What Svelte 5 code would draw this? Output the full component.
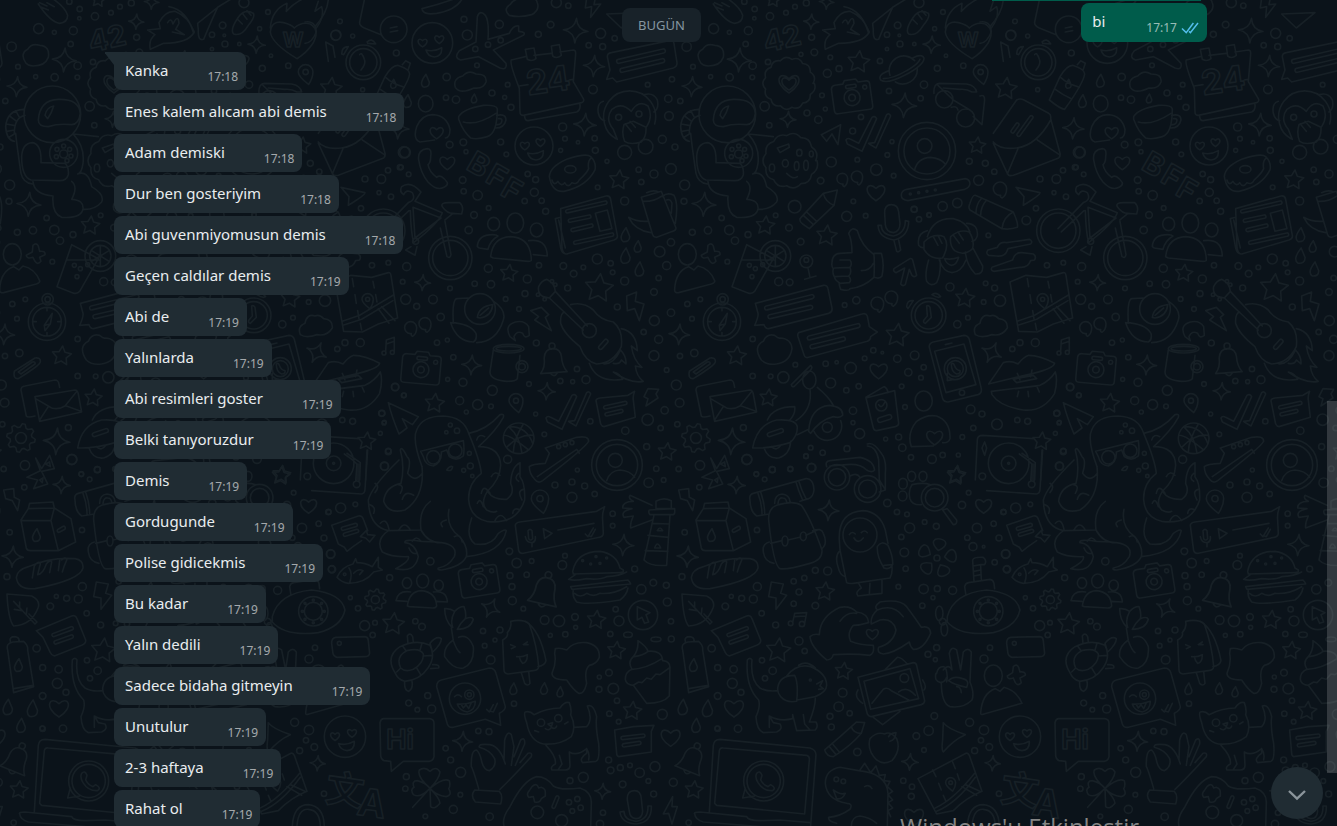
<script>
  const sent = [{ text: 'bi', time: '17:17' }];

  const received = [
    ['Kanka', '17:18'],
    ['Enes kalem alıcam abi demis', '17:18'],
    ['Adam demiski', '17:18'],
    ['Dur ben gosteriyim', '17:18'],
    ['Abi guvenmiyomusun demis', '17:18'],
    ['Geçen caldılar demis', '17:19'],
    ['Abi de', '17:19'],
    ['Yalınlarda', '17:19'],
    ['Abi resimleri goster', '17:19'],
    ['Belki tanıyoruzdur', '17:19'],
    ['Demis', '17:19'],
    ['Gordugunde', '17:19'],
    ['Polise gidicekmis', '17:19'],
    ['Bu kadar', '17:19'],
    ['Yalın dedili', '17:19'],
    ['Sadece bidaha gitmeyin', '17:19'],
    ['Unutulur', '17:19'],
    ['2-3 haftaya', '17:19'],
    ['Rahat ol', '17:19']
  ].map(([text, time]) => ({ text, time }));

  // Wallpaper: doodles in sheets of one-third-pixel units, the whole set repeating every 675px.
  const PERIOD = 675;

  const chunk = (list, n) => {
    const out = [];
    for (let i = 0; i < list.length; i += n) out.push(list.slice(i, i + n));
    return out;
  };
  const ell = (x, y, rx, ry) => `M${x - rx} ${y}a${rx} ${ry} 0 1 0 ${2 * rx} 0a${rx} ${ry} 0 1 0 ${-2 * rx} 0Z`;
  const ring = (x, y, r) => ell(x, y, r, r);
  const polar = (x, y, r, a) => `${(x + r * Math.cos(a)).toFixed(1)} ${(y + r * Math.sin(a)).toFixed(1)}`;
  const spark = (x, y, r, deg = 4) => {
    let d = '';
    for (let i = 0; i < 4; i++) {
      const a = (deg * Math.PI) / 180 + (i * Math.PI) / 2;
      d += i ? '' : `M${polar(x, y, r, a)}`;
      d += `Q${polar(x, y, r * 0.16, a + Math.PI / 4)} ${polar(x, y, r, a + Math.PI / 2)}`;
    }
    return d + 'Z';
  };
  const star = (x, y, r, deg = -84) => {
    let d = '';
    for (let i = 0; i < 10; i++) {
      const a = (deg * Math.PI) / 180 + (i * Math.PI) / 5;
      d += `${i ? 'L' : 'M'}${polar(x, y, i % 2 ? r * 0.5 : r, a)}`;
    }
    return d + 'Z';
  };
  const scallop = (x, y, r, n) => {
    let d = `M${polar(x, y, r, 0)}`;
    for (let i = 1; i <= n; i++) {
      d += `Q${polar(x, y, r * 1.14, ((i - 0.5) * 2 * Math.PI) / n)} ${polar(x, y, r * 0.95, (i * 2 * Math.PI) / n)}`;
    }
    return d;
  };
  const gear = (x, y, r) => {
    let d = '';
    for (let i = 0; i < 32; i++) {
      const a = ((i + 0.5) * Math.PI) / 16;
      d += `${i ? 'L' : 'M'}${polar(x, y, i % 4 < 2 ? r : r * 0.76, a)}`;
    }
    return d + 'Z' + ring(x, y, r * 0.38);
  };
  const petals = (x, y, r) => {
    let d = '';
    for (let i = 0; i < 5; i++) {
      const a = -1.4 + (i * 2 * Math.PI) / 5;
      d += `M${polar(x, y, r * 0.3, a)}C${polar(x, y, r * 1.25, a - 0.75)} ${polar(x, y, r * 1.25, a + 0.75)} ${polar(x, y, r * 0.3, a)}`;
    }
    return d + ring(x, y, 9);
  };
  const heart = (x, y, s) =>
    `M${x} ${y + s * 0.85}C${x - s * 1.5} ${y - s * 0.1} ${x - s * 0.8} ${y - s * 1.2} ${x} ${y - s * 0.4}C${x + s * 0.8} ${y - s * 1.2} ${x + s * 1.5} ${y - s * 0.1} ${x} ${y + s * 0.85}Z`;
  const drop = (x, y, s = 22) =>
    `M${x + s * 0.1} ${y - s}Q${x - s} ${y + s * 0.4} ${x - s * 0.3} ${y + s * 0.9}Q${x + s * 0.6} ${y + s} ${x + s * 0.6} ${y + s * 0.2}Q${x + s * 0.4} ${y - s * 0.3} ${x + s * 0.1} ${y - s}Z`;
  const quote = (x, y, r = 18) =>
    `M${x - 2} ${y + r}A${r} ${r} 0 1 1 ${x + r} ${y}Q${x + r} ${y + r} ${x + 6} ${y + r + 8}Q${x} ${y + r + 6} ${x + 2} ${y + r}Z`;
  const pin = (x, y, r = 24) =>
    `M${x + r * 0.4} ${y + r * 1.7}Q${x - r} ${y + r * 0.6} ${x - r} ${y}A${r} ${r} 0 0 1 ${x + r} ${y}Q${x + r} ${y + r * 0.8} ${x + r * 0.4} ${y + r * 1.7}Z` + ring(x, y, r * 0.36);
  const bar = (x1, y1, x2, y2, t = 6) => {
    const len = Math.hypot(x2 - x1, y2 - y1);
    const nx = ((y1 - y2) / len) * t;
    const ny = ((x2 - x1) / len) * t;
    return `M${x1 + nx} ${y1 + ny}A${t} ${t} 0 0 1 ${x1 - nx} ${y1 - ny}L${x2 - nx} ${y2 - ny}A${t} ${t} 0 0 1 ${x2 + nx} ${y2 + ny}Z`;
  };
  const smiley = (x, y, r) =>
    ring(x, y, r) + heart(x - r * 0.48, y - 1, 15) + heart(x + r * 0.34, y - 11, 15) +
    `M${x - 19} ${y + 21}Q${x + 4} ${y + 28} ${x + 28} ${y + 14}Q${x + 30} ${y + 40} ${x + 6} ${y + 42}Q${x - 14} ${y + 40} ${x - 19} ${y + 21}Z`;
  const ticks = (x, y) =>
    `M${x} ${y - 6}Q${x + 5} ${y - 14} ${x + 14} ${y - 8}L${x + 38} ${y + 4}L${x + 78} ${y - 74}Q${x + 86} ${y - 80} ${x + 92} ${y - 70}L${x + 48} ${y + 28}L${x + 4} ${y + 6}ZM${x + 68} ${y + 4}L${x + 86} ${y + 2}L${x + 122} ${y - 82}Q${x + 130} ${y - 88} ${x + 134} ${y - 78}L${x + 90} ${y + 18}L${x + 70} ${y + 6}Z`;

  const CAMERA =
    'M-58-32Q-56-42-46-42L-22-42L-16-52L18-52L24-42L48-42Q58-42 58-32L58 34Q58 44 48 44L-48 44Q-58 44-58 34Z' +
    ring(0, 2, 24) + ring(0, 2, 10) + ring(42, -24, 6) + bar(-10, -32, 12, -32, 5);
  const BELL =
    'M-40 38Q-24 20-26-8Q-22-34 0-34Q24-34 26-8Q26 20 40 38ZM-10 40Q0 54 10 40' + ring(0, -42, 9);

  const sheets = [
    {
      x: 400, y: 0,
      rings: [298,73,12,192,58,9,202,105,15,264,134,8,226,147,8,302,121,8,452,74,10,415,103,9,469,8,15,505,17,8,602,100,15,566,136,8,608,140,9,644,115,8,860,140,14,941,86,15,988,97,6,231,196,7,140,231,11,138,293,8,168,299,11,276,279,9,323,254,7,314,292,6,333,322,9,579,268,13,743,254,7,816,238,8,805,296,11,841,303,8,879,200,7,932,230,6,989,232,11,807,348,13,488,381,12,495,416,7,534,427,5,584,415,8,586,451,9,787,418,12,825,441,9,302,426,9,190,427,10,149,434,10,198,455,6,319,463,7,482,451,6,621,484,6,716,509,8,762,522,12,813,507,16,724,546,8,854,555,15,593,562,7,674,603,12,852,604,9,383,522,8,407,539,9,403,577,12,374,603,8,425,602,8,437,634,9,188,540,10,191,574,8,233,586,14,266,624,7,222,645,10,206,690,11,15,457,16,3,502,7,26,523,7,20,800,12,8,845,7,150,865,7,224,851,8,273,853,11,265,805,12,417,796,8,490,798,10,521,821,10,550,802,7,592,777,15,632,790,8,638,817,7,382,837,12,375,881,9,503,864,9,674,843,12,779,755,16,813,727,11,800,797,12,776,834,8,762,876,10,877,697,9,924,691,11,988,690,14,965,654,8,1005,722,11,982,785,7,656,352,9,717,342,9,674,457,21,737,440,22],
      sparks: [527,92,37,582,198,32,555,374,34,876,260,30,68,848,24,912,613,36,1018,180,36],
      stars: [657,540,30,327,820,27,597,865,44],
      d:
        smiley(97, 129, 61) + smiley(402, 438, 57) +
        'M232 50Q240 28 256 46Q268 64 264 118L328 100Q340 74 356 78L356 94Q380 96 370 106L280 150L318 190Q322 212 300 204L236 170L182 180Q160 174 178 152L228 126Z' +
        'M328 46Q308 28 330 14Q345-8 375-6Q405-16 412 8Q420 30 395 44Q360 54 328 46Z' +
        'M180-10Q130 10 66 26Q68 46 110 40Q170 30 188-6M560-6L556 24L575 20L572 52L602 12L582 14L586-6' +
        'M334 180L376 170M402 166L454 160M480 156L520 150Q528 150 527 162L520 245L550 296Q554 304 545 308L370 346Q360 346 360 336L358 265Q328 190 334 180M358 258L384 254M508 240L520 238M374 348Q374 362 384 362L530 336Q542 330 540 314M376 148L402 144L408 176Q396 186 382 178ZM454 138L478 134L484 166Q470 178 458 168Z' +
        'M622 170Q622 160 634 158L808 122Q820 118 822 130L831 188Q832 200 820 204L650 246L638 234L620 238L630 210Z' +
        bar(656, 184, 790, 153) + bar(666, 211, 788, 182) +
        'M902 188Q884 160 908 148Q920 128 944 136Q976 138 970 172Q960 198 925 198Q908 196 902 188Z' +
        'M166 262Q158 236 188 228Q206 208 228 222Q262 222 258 246Q250 268 222 264Q180 284 166 262Z' +
        drop(76, 243, 20) + drop(222, 296, 14) + drop(22, 304, 20) + ell(77, 311, 22, 25) +
        'M60 426Q38 418 50 380Q66 344 98 344Q140 346 150 388Q150 414 136 414M60 426L104 420' + heart(110, 398, 22) +
        'M176 350Q190 326 250 316Q288 314 292 326Q292 400 262 410Q230 420 212 414Q190 396 176 358ZM190 366Q230 378 288 340M290 346Q318 340 318 360Q312 386 284 384M296 356Q310 354 304 368Q296 378 288 372' +
        'M56 480Q52 450 82 446Q96 446 92 470Q92 488 84 494Q88 516 110 532Q124 520 142 548Q144 556 132 562Q110 574 84 546Q62 520 56 480Z' + heart(142, 488, 25) +
        'M448 530Q450 500 500 478Q560 458 572 470Q590 488 585 510Q560 560 492 574Q456 578 448 530ZM456 540Q462 560 474 544Q484 562 494 548Q504 566 516 548Q530 556 538 540Q560 520 566 506Q562 484 574 474' + ell(511, 508, 17, 11) +
        'M614 372A78 78 0 1 1 764 372M610 304Q590 310 595 340Q600 360 614 362M733 284Q760 276 772 300Q778 326 762 336M640 388Q614 356 636 328Q664 304 694 334Q716 298 744 318Q760 350 740 380M672 374Q664 400 674 424Q690 436 724 426Q740 410 738 382L700 364ZM690 364L706 382M676 372L694 394M614 372Q620 400 648 416M640 388L652 418' +
        ell(281, 672, 18, 20) + ell(346, 669, 25, 30) + ell(410, 690, 19, 21) +
        'M272 770Q278 712 332 710Q392 712 394 780Q394 784 384 784L280 774ZM232 740Q234 704 278 704Q290 704 294 708Q270 722 264 748L238 744ZM386 722Q440 714 442 768L400 764' +
        'M482 626L618 588Q630 586 632 598L652 706Q654 716 642 720L500 762Q490 764 486 744ZM482 652L466 656L482 744Q486 764 502 762M476 660L496 744M586 640L622 630L636 686L600 694Z' +
        bar(502, 634, 616, 608, 5) + bar(510, 662, 568, 650, 5) + bar(518, 690, 574, 677, 5) + bar(526, 728, 636, 704, 5) +
        'M724 592L784 574L828 684Q828 692 818 694L770 712Q760 712 758 704ZM728 604Q760 606 786 588M788 590Q800 576 822 586Q836 610 826 670M800 600Q812 596 816 610L814 640M744 664Q710 666 686 652Q704 690 752 698M740 578Q760 568 776 576' +
        drop(676, 705) + drop(713, 740, 18) + drop(676, 768, 24) + drop(718, 808, 22) + ell(862, 763, 27, 32) +
        'M824 870Q826 814 866 800L882 810L894 798Q930 806 944 842Q946 848 934 852L836 878Q824 880 824 870Z' +
        'M924 736Q934 726 940 738L944 754Q962 752 960 764L944 772L948 784Q938 796 930 784L924 772Q904 778 904 766L922 756Z' +
        'M620 42L720 38L664 84ZM940 12Q976 66 1004 70Q1028 68 1028 46Q1020 20 980-6M944 8L966 18M946 20L970 30M966 8L988 20'
    },
    {
      x: 600, y: 0,
      rings: [433,5,8,464,27,8,463,55,5,510,49,11,558,38,7,585,20,7,619,9,9,635,112,9,643,157,10,603,163,6,437,132,8,445,92,12,504,186,8,458,197,11,457,232,7,494,319,14,508,376,8,621,339,9,655,359,11,666,286,7,676,327,6,682,220,12,717,206,9,691,172,7,840,183,8,867,273,8,962,295,8,972,254,11,893,76,10,861,104,8,900,132,9,861,147,5,943,132,5,898,106,4,1004,86,6,957,8,15,1029,36,7,1038,167,5,1012,205,9,1090,197,8,783,351,8,758,393,9,876,425,6,862,465,7,772,479,7,694,486,15,662,542,10,829,509,17,881,527,7,1108,484,9,1156,490,9,1183,515,8,1136,541,15,943,628,9,988,645,6,382,343,85,416,460,42,416,462,12,416,438,6,434,448,6,438,468,6,426,482,6,394,470,6,396,448,6,981,453,86,981,453,69,974,438,22,1033,298,26,1097,354,27,931,582,3,956,578,3,981,574,3,1006,570,3],
      sparks: [634,65,23,995,134,26,913,316,37,564,358,24,680,6,22],
      stars: [776,186,34,1132,437,26,520,0,22],
      d:
        'M870 226A44 44 0 0 1 944 182M952 206A44 44 0 0 1 886 246M868 212Q832 224 842 240Q860 254 914 226Q974 194 972 174Q966 160 938 174M850 236Q880 236 920 212Q956 192 960 178' +
        'M668 90L706 86L702 68Q720 32 750 34Q790 50 808 96Q790 130 716 130L676 148Q670 120 690 104ZM732 20Q786 30 806 100M728 68Q738 50 744 72Q760 40 762 70L752 88L778 104L742 96' +
        'M818 70L878 22Q860 60 836 118Q818 124 820 90ZM878 22L920-4' +
        'M985 40Q992 50 970 76Q950 110 926 102Q914 90 940 52Q960 24 985 40M940 60L952 72M954 42L966 58M966 32L978 46' +
        'M1116 176Q1040 130 1036 96Q1040 60 1076 68Q1100 74 1108 84Q1130 64 1156 72Q1186 90 1164 130Q1144 160 1116 176ZM1036 84Q1040 30 1086 10L1084 34Q1110 6 1140-6M1174 84Q1200 50 1190 20L1170 34L1180 4' +
        scallop(567, 250, 76, 13) + heart(567, 250, 34) + heart(567, 250, 24) + pin(1142, 216, 22) +
        'M1002 280Q1000 250 1020 250L1100 252Q1126 256 1130 276L1116 276Q1100 266 1080 268L1030 264M1140 288Q1154 282 1154 300L1146 374L1120 350M1054 322Q1070 316 1074 330M1014 256L1060 300L1110 330' +
        'M944 510Q952 474 992 472Q1020 474 1036 492' + ticks(738, 426) + 'M664 404L722 374L714 434L696 402L680 424Z' +
        'M340 360Q344 300 400 298Q462 296 466 340Q462 372 440 374Q400 370 370 380Q340 380 340 360ZM360 346Q364 322 386 318Q380 340 368 356ZM296 328Q246 330 242 380Q244 420 268 424M300 346Q268 352 268 400M272 332L282 350M254 348L272 362M244 372L266 376M246 394L268 390M252 412L268 402' +
        'M272 400Q276 440 288 520Q294 548 322 552M290 470Q292 430 322 428Q350 432 348 488L420 490Q432 500 430 524Q424 544 400 542L318 540Q290 530 290 470M446 404Q480 440 474 490Q470 520 458 522M324 545Q328 584 384 588Q380 640 410 652Q470 656 474 626Q476 600 440 598Q460 560 440 544M458 522Q490 510 500 560Q540 584 530 606Q510 630 474 628M446 402L520 410' +
        scallop(571, 482, 80, 11) + 'M532 444L566 432L568 442L540 458ZM560 520Q580 540 592 530' + ell(556, 490, 9, 11) + ell(598, 458, 8, 10) + ell(590, 498, 7, 13) + ell(618, 496, 7, 15) + ell(516, 504, 8, 12) + ell(634, 462, 6, 9) +
        quote(727, 536, 16) + quote(771, 530, 17) + heart(828, 577, 30) +
        'M920 568L1096 536Q1110 538 1110 552Q1108 564 1094 568L924 602Q904 600 904 586Q904 572 920 568'
    },
    {
      x: 740, y: 180,
      rings: [164,80,19,320,109,15,340,64,7,377,107,7,182,185,10,147,143,10,24,164,9,107,106,7,116,305,12,149,307,10,608,79,14,652,69,14,522,88,9,567,105,7,537,118,8,942,38,6,978,50,8,888,85,8,859,121,13,745,166,7,921,256,8,970,248,7,630,321,12,737,310,7,764,324,9,780,362,17,731,366,7,684,413,7,652,433,11,314,375,7,349,361,11,400,511,8,427,518,4,374,535,7,472,536,11,524,526,13,505,577,11,551,562,8,543,593,7,332,564,17,290,547,5,257,551,8,166,554,7,38,477,8,38,588,8,92,589,7,130,592,17,272,609,15,319,631,8,356,619,8,485,619,7,495,681,7,339,692,11,339,728,6,359,761,15,437,777,6,476,771,9,487,803,11,513,832,8,576,837,13,608,825,8,655,825,6,667,771,7,700,744,8,692,688,13,726,702,9,771,733,16,832,720,8,863,724,9,817,507,8,840,488,9,886,488,12,991,621,11,951,700,9,957,729,6,970,815,9,959,859,12,212,803,7,198,828,7,248,818,8,321,806,9,214,863,12,151,867,8,97,869,9,20,839,15,49,883,7,10,743,9,727,889,10,106,228,46,106,228,32,28,256,6,46,266,6,36,290,6,68,254,6,199,244,19,199,240,7,566,406,52,566,406,41,262,742,15,424,676,17,646,566,33,646,566,24,666,638,8,957,519,6,982,517,6,806,850,61,806,850,22,806,850,3],
      sparks: [],
      stars: [76,137,29,260,167,32,675,355,30,472,466,36,85,654,27,905,784,28,650,884,28],
      d:
        spark(755, 518, 32, 25) +
        'M292 30L250 40L180 116Q178 126 188 132L208 146L282 76ZM250 40Q256 66 282 76M200 96L230 124M190 106L220 134' +
        'M434 98Q434 74 454 74Q474 74 476 96L480 130Q480 156 460 158Q438 156 436 134ZM414 136Q416 174 462 180Q506 170 506 124L496 122Q496 160 460 168Q424 164 424 136ZM462 182L470 214Q476 218 482 210L476 180' +
        'M276 248Q276 222 300 220L336 218Q336 180 326 160Q336 138 352 152Q364 196 402 224Q404 250 402 292Q370 322 330 326Q328 334 302 328Q296 314 298 308Q284 300 284 292Q276 280 280 266Q274 260 276 248ZM300 240L330 240Q338 250 330 262L284 264M330 262Q336 280 326 288L284 290M326 288Q336 300 328 308L300 310M364 272Q390 272 400 250M402 220L424 220Q434 250 426 288Q420 298 402 292' +
        'M20 194L100 236L44 334Q36 344 22 338L-24 320L4 240ZM4 240L102 240M106 200L106 256M80 212L132 244M80 244L132 212M204 264L210 292M194 298L228 288' +
        'M510 236Q516 234 518 240L530 286Q524 294 516 286L508 268L496 314Q488 320 482 312L494 264L468 278Q458 274 462 266Z' +
        'M562 170Q580 112 640 116Q680 126 690 156M562 152Q530 160 536 196Q544 206 552 202M680 130Q716 132 712 168Q706 184 696 184M552 186Q580 158 612 170Q630 196 608 234Q570 240 552 208ZM632 170Q660 146 688 156Q704 180 698 206Q672 230 644 212Q628 196 632 170M580 170L594 196M594 166L606 190M640 166L658 190M654 156L670 180M598 240Q610 276 636 278Q664 276 678 240M614 236Q636 240 656 232Q650 256 634 256Q618 252 614 236M566 240Q554 280 560 304Q572 322 590 308Q604 280 600 240M676 216Q680 256 706 282Q730 284 728 258Q716 236 700 206' +
        quote(412, 370, 19) + quote(454, 352, 19) + quote(780, 26, 20) +
        'M560 378Q566 374 570 382L574 412L556 430Q548 428 552 420L562 408ZM500 380Q500 360 520 362L504 386ZM576 344Q590 334 602 350Q594 356 576 344' +
        'M706 46L820 96Q836 132 832 142Q810 150 786 146L690 90Q684 82 690 70Q698 44 706 46ZM820 96Q790 110 786 146M726 54Q708 72 708 98M740 60Q722 80 722 106' +
        'M828 22L900 38Q902 44 850 76L852 50Z' +
        'M744 210L772 202Q780 184 800 188L868 178Q880 184 872 192L804 206Q796 232 770 228L746 226Q736 220 744 210ZM756 262L818 240Q824 216 846 218L880 222Q890 228 884 240L872 242Q864 264 840 262L762 274Q750 272 756 262Z' +
        'M810 306L858 286L920 292L970 278Q976 276 978 286L998 414L940 432L892 456L836 454ZM862 296L866 320M870 344L874 370M878 392L882 416M886 430L890 450M924 304L928 324M932 344L936 366M832 424L884 406L984 346M834 436L890 418L984 362M940 386L972 430M950 380L990 422' + pin(908, 358, 17) +
        'M46 370L250 316Q262 314 264 326L276 384Q278 396 266 400L86 446Q76 446 72 434L44 436Q56 410 54 400Z' + bar(80, 384, 216, 350) + bar(90, 410, 212, 382) +
        'M176 458L366 402Q378 398 382 408L388 440L412 456L392 470Q392 480 382 484L206 532Q196 536 192 524L174 470Q172 462 176 458Z' + bar(208, 474, 354, 437) + bar(216, 500, 310, 477) +
        'M64 540Q38 500 70 484Q80 460 104 466Q116 476 120 474Q154 476 156 506Q150 546 110 552Q80 556 64 540Z' +
        ell(208, 600, 20, 27) + 'M154 614L212 556Q220 562 210 572L164 618Q156 624 154 614M232 622Q266 650 280 676M210 628Q218 690 168 722M206 754Q210 682 268 676Q310 680 308 706Q300 716 280 710Q240 720 212 760ZM222 754A42 42 0 1 0 302 722M38 804Q50 734 110 720Q170 716 172 742Q172 770 150 788Q90 806 38 804ZM82 720Q100 680 164 680Q168 700 148 722M72 804Q84 838 116 834Q150 824 152 784M94 800Q110 816 124 794M172 764L206 748' + bar(88, 764, 124, 752) +
        'M378 654L464 632L476 730Q476 738 466 740L410 752Q402 752 400 744ZM378 652L432 620Q442 624 444 638M416 674Q424 688 434 668' + bar(420, 720, 448, 711, 7) + heart(416, 572, 29) +
        'M568 502Q566 490 580 486L672 466Q684 466 688 478L724 626Q726 640 714 644L624 666Q612 666 608 656ZM584 514L672 492L708 614L618 638ZM616 494L636 489M622 580L622 602L642 598M634 552Q640 546 644 558Q648 570 660 572Q662 582 650 582Q634 576 634 552' +
        'M706 464Q696 440 720 430Q726 400 750 408Q764 402 776 416Q804 418 802 444Q786 470 756 464Q724 476 706 464Z' +
        'M746 612Q766 584 790 548Q812 540 834 552Q850 532 866 526Q900 526 944 550Q940 566 880 580ZM754 634Q820 626 900 616Q930 602 946 576Q954 600 944 640Q910 696 850 690Q780 680 756 644ZM820 598L880 586L890 596L830 608ZM826 626L890 618M832 580L840 600M876 570L872 590M836 634L832 650M864 634L866 650M892 622L898 636' +
        'M962 516L964 480L988 472L988 514M964 492L988 484' + ell(551, 663, 26, 30) +
        'M580 798L514 800Q500 760 530 724Q560 702 590 708Q632 724 630 776Q626 790 608 788' + heart(584, 772, 27) +
        'M706 900L712 780Q712 766 728 766L880 776M906 810L902 900M838 822Q860 836 876 852L876 900M846 820L886 848L884 900M734 786L740 804L734 826L726 804Z'
    },
    {
      x: 400, y: 280,
      rings: [17,58,15,99,58,13,50,79,9,122,111,11,111,188,8,142,180,6,160,232,8,189,307,12,143,298,6,277,331,15,387,312,7,317,57,7,357,87,7,409,189,9,531,267,8,481,303,8,518,305,6,558,299,12,652,81,9,731,156,8,763,122,15,776,178,12,762,227,15,813,98,11,862,72,8,901,58,7,876,116,7,883,219,11,840,228,8,800,270,7,829,315,15,839,368,13,794,391,11,743,419,17,832,433,8,782,444,8,676,452,11,571,424,8,407,402,6,433,463,7,323,538,12,233,374,15,179,362,12,273,379,7,199,396,6,12,346,7,151,435,6,171,452,8,139,457,5,208,520,6,211,558,9,191,571,6,217,588,5,740,500,9,769,566,8,836,567,8,791,600,7,746,608,14,898,622,8,900,556,14,532,570,6,465,615,9,516,606,9,554,618,9,584,642,8,516,652,15,638,701,8,638,737,7,854,757,8,328,814,10,495,827,7,240,87,46,568,152,21,366,260,18,366,260,10,966,125,56,966,125,43,968,58,17,968,58,8,356,475,46,476,500,6,496,494,6,516,488,6,651,555,76,651,555,62,646,541,21,100,532,20,166,512,20],
      sparks: [215,255,30,440,334,26,838,163,31,995,484,40,1010,615,26,670,795,32,863,830,32],
      stars: [104,370,30,801,516,28,1010,228,30],
      d:
        quote(32, 143, 18) + quote(75, 131, 18) +
        'M160 130Q156 60 170 56L204 54M278 62Q320 90 310 120Q290 186 230 188M152 128Q210 130 228 160Q232 180 220 186Q170 184 152 128M232 112Q236 80 278 74Q276 108 240 114ZM240 106L266 84' +
        'M330 170Q312 136 346 126Q374 120 386 140L388 166Q374 178 368 160Q350 150 342 170L346 182Z' +
        'M392 92L424 82L446 104L436 112L454 152L404 120L416 110ZM680 48L710 36L706 64L732 72L718 122L704 86L682 92Z' +
        'M416 20Q412 40 430 50L448 54L466 34Q464 10 440-2Q424 2 416 20M448 54L550 150M466 34L562 138M512 74Q550 64 580 90Q600 120 640 126Q670 150 664 200Q640 250 590 252Q556 244 540 200Q490 160 482 130Q480 100 494 96' +
        ring(456, 4, 5) + ring(466, 14, 5) + ring(414, 44, 5) + ring(434, 58, 5) + bar(602, 202, 618, 184, 6) +
        'M664 146Q710 156 712 212L694 198Q700 240 726 262L706 258Q710 290 730 304Q690 312 640 276Q660 280 668 298M568 250Q590 310 666 298M612 252Q640 254 662 210Q680 230 678 252L664 240Q660 254 640 250' +
        'M280 210L270 276Q270 300 320 304Q346 304 352 296L360 226' + ell(326, 206, 46, 13) + ell(326, 206, 38, 7) +
        'M868 274L930 234Q948 232 946 246Q944 256 880 296Q864 298 868 274ZM880 276Q900 262 922 246Q932 244 930 252L888 282Z' +
        'M958 136L982 100L976 132L960 152ZM958 136L976 132M966 84L966 92M966 158L966 166M926 125L934 125M998 125L1006 125' +
        'M888 330Q888 320 900 318L990 300Q1000 300 1002 312L1004 322M888 330L904 408Q908 414 930 408M930 350L1050 330Q1058 330 1060 342L1070 396L944 424ZM932 356L980 384Q1000 390 1020 378L1054 336M944 420L970 380M1068 394L1024 378' +
        pin(348, 362, 21) + pin(420, 656, 26) + ticks(438, 420) +
        'M588 362Q588 356 600 354L684 346L704 334Q698 350 700 360L706 412L612 440Q606 440 602 432Z' + bar(616, 382, 676, 369, 5) + bar(620, 403, 664, 393, 5) +
        'M744 326L776 328L768 342L774 354L738 378L744 356L732 350Z' +
        'M326 440Q360 470 366 520M370 432Q340 480 340 518M400 466Q360 460 320 502M312 466Q330 464 386 510M330 440Q380 440 398 490' +
        'M388 560Q396 552 436 550L448 520L436 504L530 472Q566 466 566 484Q560 500 428 602Q414 612 404 598Q388 580 388 560ZM412 590L530 508L538 520' +
        'M620 602Q630 572 660 570Q690 572 704 592' + gear(888, 474, 43) +
        'M932 534L950 566L974 526L988 566L950 574L968 612L926 626L938 600L906 592L946 572ZM962 552L974 546L976 560ZM944 600L954 594L952 608Z' +
        'M836 630L866 626L868 652L884 660L878 692L862 662L842 656Z' +
        'M66 560Q36 480 50 450Q66 408 130 408Q190 410 206 460Q240 540 244 580Q204 610 206 660Q210 712 260 724Q350 736 374 660Q376 610 360 590L360 548Q334 560 332 610Q346 640 320 658Q280 660 264 636M206 460Q260 450 300 404Q314 400 310 412Q290 450 236 500Q300 500 302 556Q300 600 262 634Q240 670 260 690Q280 700 290 694M62 514L190 482Q194 510 190 528Q170 546 148 530L140 510L124 516Q126 546 100 558Q76 556 70 530ZM140 570Q150 556 158 560Q156 576 140 570' +
        'M230 480Q236 460 254 470M274 590Q284 570 300 586M244 640Q250 610 270 640M232 670Q240 650 250 680M284 724Q300 690 320 722M338 700Q340 680 360 690M370 628Q350 632 366 660M356 580Q340 594 356 604' +
        'M346 736Q346 728 360 726L590 694L614 680Q606 700 608 720L610 760Q610 770 598 772L370 820Q360 822 356 812ZM384 752Q390 744 396 752L398 776Q392 784 386 776ZM376 770Q380 790 398 788Q408 784 406 770M396 790L396 800M430 746L456 760L434 776ZM474 750L582 730M556 762L564 770L580 744M568 768L574 770L586 748' +
        'M768 664Q790 650 814 662L814 686L768 686ZM748 690L824 686Q826 702 820 704L750 704Q744 698 748 690ZM762 706L732 840Q750 860 800 856L810 706M756 730L808 732M744 766L806 772M736 812L804 814M772 752Q780 736 788 752ZM764 804Q772 780 782 804Z' +
        'M756 676L690 646Q684 656 700 664Q668 664 668 684L696 686Q660 694 672 712L700 708Q690 730 692 744L756 720' +
        'M914 670L984 666L988 684L910 686ZM910 686L888 720L904 804Q906 812 916 812L1000 812M888 722L978 722L988 684L1038 716L1052 786L1000 812L978 722' + drop(934, 766, 20) + bar(1002, 752, 1016, 744, 5)
    },
    {
      x: 400, y: 540,
      rings: [91,64,11,350,69,14,395,63,7,330,107,9,336,140,9,337,182,12,380,104,8,370,206,7,487,75,13,704,87,9,724,148,14,760,128,10,799,136,9,846,110,9,802,186,12,813,244,8,814,297,9,657,243,15,647,208,8,631,282,8,434,240,13,477,243,17,525,231,10,527,262,6,496,283,8,451,286,6,300,270,9,249,273,8,285,300,6,254,317,7,272,359,13,46,244,8,66,260,10,935,325,11,976,199,10,994,169,6,953,383,9,1001,388,11,997,430,15,953,468,10,627,398,10,598,411,6,597,448,9,640,446,16,651,482,8,628,521,8,656,545,7,787,523,15,342,491,8,83,467,9,95,507,12,26,489,9,52,509,7,235,573,8,267,575,9,137,625,8,152,660,9,182,697,15,19,710,9,16,746,8,181,764,7,160,808,12,269,830,11,76,829,7,510,722,9,550,712,15,626,660,9,632,691,10,661,683,9,690,676,7,719,698,14,765,680,15,745,723,7,668,733,10,761,762,9,820,727,12,609,818,8,953,566,8,866,848,8,600,852,11,195,476,47,208,464,14,208,464,6,729,225,44,423,548,11,475,535,11,412,817,19,485,842,18,507,787,8,532,777,8,517,813,7,542,803,8,548,62,3,572,72,3,600,70,3,588,50,3,620,54,3],
      sparks: [188,604,30,608,754,24],
      stars: [589,240,29,649,332,28,697,513,29,882,750,28],
      d:
        spark(272, 204, 30, 25) + ell(21, 129, 14, 16) + ell(68, 123, 18, 21) + ell(116, 136, 14, 16) +
        'M22 198Q28 154 64 152Q108 156 110 198Q108 204 98 204L28 200ZM100 156Q140 150 142 186L110 184M32 156Q-6 150-12 182L20 184' +
        'M156 262Q134 240 134 206Q150 204 164 214Q180 198 192 200Q200 220 196 236Q216 228 220 238Q212 268 172 268M164 214Q150 240 158 262M196 236Q180 250 172 268M154 264L160 302Q170 330 180 338M160 300Q130 320 134 350Q160 390 190 384Q224 370 220 320Q204 280 176 292' +
        'M-14 400Q-46 350 0 320Q50 296 90 316Q108 350 84 384Q60 420 14 424Q-6 418-14 400ZM2 384Q-14 350 20 332Q60 322 70 342Q72 370 40 388Q16 398 2 384ZM24 310L22 288Q30 276 38 290L40 306M96 330L90 310Q110 286 124 296Q124 312 98 336M98 374Q120 372 116 384L92 386M36 424Q40 446 26 454Q12 452 14 424M60 330L66 310M70 348L96 346M50 384L62 404M2 384L-10 396M18 332L8 318' +
        'M110 440Q110 424 124 420L268 384Q284 384 288 400L316 500Q316 510 298 520L302 556L256 538L160 562Q146 564 142 552ZM164 470Q174 460 184 470M172 492Q200 494 226 484Q226 510 202 516Q178 512 172 492ZM184 494L190 504L198 494L206 506L214 488M260 508L268 516L280 494M272 514L280 516L292 490' +
        'M308 300Q326 290 322 278Q336 262 332 244Q370 236 388 252Q412 320 416 380Q416 390 400 392L324 402Q312 400 312 390ZM376 244Q420 270 438 362Q436 376 414 380M364 398L374 430Q384 440 390 430L386 394M332 314L346 320L334 326M382 306L370 314L384 314M350 350Q366 352 382 344Q382 368 368 370Q360 362 358 350' +
        'M518 94Q530 34 600 34Q650 42 660 84L670 90Q672 98 660 98L520 102ZM506 118L526 104M506 118Q520 124 560 116Q600 120 620 110Q660 108 680 96M512 140L684 120Q690 126 692 132L516 148ZM520 152Q516 170 530 186Q560 196 660 180Q680 166 684 144M524 160Q540 176 560 160Q580 172 600 160Q640 164 680 140' +
        'M712 200L750 218L738 224L746 246L734 250L726 232L712 240Z' +
        'M846 162L920 168Q946 180 940 202Q920 256 866 258Q850 240 846 162ZM866 184L930 252L936 246L912 222M884 200L884 186M890 212L868 208M904 224L906 204' +
        'M848 330Q842 310 864 306L896 304Q910 316 908 330L926 440L866 458ZM856 304Q852 290 870 290Q884 292 882 304M866 446L924 436' + drop(880, 376, 20) +
        'M466 326Q480 322 500 330Q520 304 560 308Q600 316 598 352Q590 372 568 376Q552 390 560 430Q552 464 536 460Q520 450 500 420Q456 420 456 400Q470 370 464 340Z' +
        'M676 418Q676 396 696 388Q682 366 700 350Q716 330 714 302Q740 320 744 334Q786 330 788 362Q810 364 810 382L808 468Q790 490 740 490L700 436Q678 434 676 418ZM700 436L716 426L726 428L740 414L754 418L768 402L780 404L808 384M696 388Q740 386 786 356M702 350Q730 346 744 334' +
        drop(340, 447, 18) + drop(432, 446, 18) + drop(480, 456, 16) + drop(848, 502, 24) + drop(922, 506, 26) + drop(888, 557, 22) + ell(684, 284, 13, 8) + ell(768, 298, 15, 7) +
        'M380 548Q370 520 376 516Q390 512 402 524Q440 504 480 504Q494 484 508 488Q516 510 512 524Q530 560 514 590Q480 616 430 612Q390 604 380 548ZM444 552L458 548L454 560ZM436 566Q448 574 454 562Q466 570 470 558M404 572L416 576M494 552L504 546M522 562L560 560Q580 540 562 498Q580 490 590 530Q586 560 596 610Q600 660 588 664L548 668Q536 656 560 640L560 626Q530 650 508 636L510 676Q510 690 496 690L456 690Q450 680 466 672Q470 650 438 616M478 646L486 672L474 690M560 626Q570 640 566 660' +
        'M644 570L700 560L762 556L754 574L754 636L656 650Q650 648 650 640Z' + bar(668, 594, 730, 587, 5) + bar(672, 616, 718, 609, 5) + heart(812, 592, 32) + heart(1002, 504, 32) +
        'M236 746Q220 690 214 680Q212 630 230 630Q240 640 244 660Q250 690 268 692Q290 680 284 656Q270 630 238 622Q234 610 270 614Q300 620 316 672M312 660L314 600Q322 570 334 584L342 620L334 676M342 650L362 600Q376 590 374 612L346 676M360 668L384 640Q398 636 394 650Q330 720 300 748M224 750L298 754Q310 766 302 792L226 786Q210 768 224 750Z' +
        'M-50 536L90 536Q102 538 102 550L102 650Q100 662 88 664L10 664L-26 694L-28 664L-48 662Q-56 660-58 648L-60 548Q-58 538-50 536Z' +
        'M90 745Q50 710 58 690Q74 678 90 694Q108 676 120 696Q118 716 90 745Q130 712 148 722Q152 738 146 746Q158 766 138 770Q110 768 90 745Q120 776 120 790Q104 810 92 800L90 745Q60 776 40 764Q30 748 42 742Q34 722 52 722Q76 728 90 745L38 802' +
        'M316 868Q300 840 330 800Q370 720 410 710Q440 710 460 738Q480 752 540 744Q576 756 574 790L572 868M396 740Q410 726 416 744L424 742Q436 746 436 756L436 768L424 776Q420 790 404 786L400 770L386 772Q378 762 388 752Z' + bar(461, 800, 472, 773, 5) +
        'M682 780Q680 752 704 752Q722 752 724 776L728 814Q726 836 708 836Q690 834 688 814ZM660 816Q664 850 710 852Q756 848 754 798L744 798Q746 840 708 844Q672 840 672 814Z' +
        'M818 770L816 800L832 800L816 852L806 820L790 822Z'
    },
    {
      x: 660, y: 440,
      rings: [261,58,15,289,102,7,314,118,7,337,89,9,391,87,7,455,83,13,438,49,7,291,270,8,682,189,11,711,216,8,741,223,7,749,264,15,794,246,7,829,259,9,724,291,8,733,337,13,737,386,8,466,391,9,503,393,12,433,414,8,401,424,8,417,456,9,401,491,8,466,497,10,347,555,9,305,520,8,292,440,12,245,475,9,280,477,12,417,603,12,434,633,8,306,661,8,338,692,11,315,715,8,243,757,9,234,866,11,172,865,7,548,758,13,536,800,14,510,829,9,569,820,8,514,861,9,592,936,11,715,440,7,791,447,14,832,446,9,819,473,6,787,497,8,878,451,12,906,195,11,926,158,7,1030,216,8,951,264,14,1001,251,8,922,293,8,939,320,12,971,320,4,1017,294,9,1037,342,12,1004,367,8,1040,388,10,830,623,9,804,643,9,826,659,6,990,623,8,972,657,12,823,828,10,806,872,14,769,888,10,792,930,7,929,847,12,972,870,14,963,901,8,988,921,10,944,932,9,730,1022,8,756,1040,8,754,1069,9,1017,1061,8,392,550,7,426,552,8,531,112,38,531,112,26,623,147,40,623,147,27,824,173,40,824,173,28,600,285,51,985,514,44,985,514,27,848,545,10,451,720,3,733,714,13,529,1018,7,550,1024,7,311,1023,60,311,1023,50,1063,610,6,985,480,3,1010,490,3,1018,514,3,1010,538,3,985,548,3,960,538,3,952,514,3,960,490,3],
      sparks: [506,211,31,750,966,25,998,970,23],
      stars: [495,455,29,355,632,38,551,694,27,888,108,28],
      d:
        smiley(1080, 890, 62) +
        'M94 412Q96 390 130 380Q200 350 270 356Q296 360 294 384Q286 420 150 446Q98 450 94 412ZM142 414L148 378Q160 360 166 372L158 404Q174 402 184 372Q196 358 200 366L194 398M220 392L224 362M230 360Q240 350 246 358Q236 380 232 396' +
        'M154 572L260 528Q272 524 276 536L302 600Q304 610 290 616L208 648Q200 646 196 638L174 592Z' + bar(206, 585, 260, 565, 5) + bar(212, 607, 260, 590, 5) +
        'M334 426L370 432L362 460L380 466L348 508L348 474L326 470ZM398 548L404 520L440 518L434 550M404 530L438 528' +
        'M270 180Q266 164 280 160L438 116Q460 114 462 150Q460 170 446 176L420 184M328 222L290 228Q270 214 270 180M294 160Q306 190 306 222M302 156Q314 190 314 220M408 126Q414 150 428 180M416 122Q424 150 438 176M344 190Q344 164 366 162Q388 164 390 184M354 190Q356 172 368 174Q378 174 380 186' +
        'M326 240Q324 206 350 196Q400 180 424 196Q450 230 486 330Q488 360 450 370Q380 390 360 386Q340 376 326 240ZM332 310L366 302M384 300L422 291M438 286L472 270M458 272Q484 262 490 280Q504 310 486 326M328 306Q306 312 310 336Q314 366 342 370' + ell(375, 303, 9, 15) + ell(430, 289, 9, 13) +
        'M500 80Q494 64 510 62L600 52Q640 60 644 90Q636 100 620 90Q600 70 560 74L510 78M622 12Q640 4 664 40Q680 60 676 100L676 150L658 156M622 18Q650 20 656 60L658 120L674 146M570 108Q590 96 600 112' +
        'M848 210L862 206L890 240Q892 254 880 254ZM812 134Q790 126 756 134Q744 150 750 176Q756 196 784 194' + ell(729, 131, 13, 16) + ell(755, 109, 12, 15) + ell(789, 109, 12, 15) + ell(728, 168, 13, 15) + heart(971, 197, 27) +
        'M538 300Q534 216 610 212Q660 216 676 270L684 310M538 300L540 330L560 428Q566 432 580 430L690 414Q698 400 696 380M652 320Q664 300 684 316Q700 350 698 374Q690 390 672 384Q650 350 652 320M538 334Q524 350 534 380Q540 408 556 410M596 430L604 444Q584 456 594 468L628 464L630 430M630 464L666 460L666 420M568 284Q576 272 586 282M604 278Q614 268 622 278M582 294Q594 314 610 294M672 376L696 374' +
        petals(831, 354, 76) +
        'M862 530Q880 460 980 450Q1070 460 1080 510Q1070 560 1000 578Q900 590 862 546ZM918 466L914 440Q916 430 926 428L990 418Q1000 420 1002 430L1004 446M942 424L938 360Q942 350 970 352Q982 362 974 374L962 374L964 418M940 378L962 374M942 394L962 390M942 408L962 404' + ell(838, 520, 11, 22) + ell(853, 568, 10, 20) +
        'M520 644Q516 660 500 660Q452 620 450 590Q460 580 478 584Q480 530 540 502Q570 496 590 516Q624 520 626 548Q600 556 580 556Q560 580 572 604Q600 616 640 616Q644 640 630 646Q580 640 520 644ZM540 544Q560 514 590 520M634 552Q630 530 652 510Q640 500 660 486Q720 476 740 500Q770 540 784 562Q810 556 812 580Q790 630 760 628Q750 620 748 606Q700 640 670 642Q650 640 656 622Q700 610 708 570Q700 534 660 540L634 552M652 510Q700 490 730 530' + heart(637, 582, 20) +
        'M262 660Q270 650 276 660Q270 720 300 744Q320 756 354 752M262 660Q256 740 296 780Q302 800 288 830Q290 870 310 878L350 876Q370 868 360 852L340 848L328 828Q360 846 398 836L398 824L410 872L466 870Q476 860 468 846L448 846Q466 800 466 776M328 828L328 862M430 824L434 852L450 870M354 740Q360 706 404 706Q416 730 410 784Q380 790 362 770Q350 756 354 740M380 708Q410 670 452 680Q500 700 500 736Q500 756 466 770L412 780M470 732L488 722L480 738L490 746L476 748M416 676Q440 660 466 684' +
        'M594 712L760 668Q768 668 770 676L794 782Q794 790 784 794L634 830Q626 830 622 822ZM612 724L750 686L776 776L632 808ZM636 790L670 748Q682 740 694 752L746 780M716 756Q740 736 766 766M676 688L712 652Q722 650 742 672M640 832L668 854L720 814M594 750Q580 770 608 790M788 720Q802 740 792 750' +
        'M830 700Q834 680 850 680Q860 680 862 712L860 726M850 690Q866 670 876 690L868 640Q874 616 890 630L902 690L910 636Q924 620 934 636L930 726Q944 760 936 780Q910 806 870 800Q844 790 844 726M828 700Q822 724 842 728Q856 726 860 712M866 722Q880 706 908 716Q930 720 920 742Q880 734 866 722M890 740Q902 740 904 758' +
        ell(1000, 707, 27, 32) + 'M962 820Q966 760 1006 746L1020 754L1032 742Q1070 752 1086 790L972 822Q962 826 962 820' +
        'M1060 680Q1070 670 1076 682L1080 696Q1098 694 1096 706L1080 714L1084 728Q1074 740 1066 728L1060 714Q1042 720 1042 708L1058 698Z' +
        'M1040 610Q1040 594 1052 592L1140 590Q1150 592 1150 602L1154 640Q1152 650 1140 650L1056 652Q1046 650 1044 640Z' +
        'M850 848Q862 866 916 884Q880 900 850 936Q844 930 848 900Z' +
        'M614 848L590 846Q530 900 494 930Q500 950 520 950Q570 920 604 880ZM508 920L528 944M516 910L538 936M574 860Q580 880 604 880' +
        'M674 882Q690 872 710 896Q724 930 696 962Q670 976 650 960Q620 930 630 896Q650 874 674 882M686 890Q690 880 708 878Q706 900 690 904' +
        'M496 1030Q496 990 540 982L596 992Q680 1000 684 1060L682 1160M496 1030Q500 1080 560 1090Q580 1090 570 1108Q540 1130 506 1132Q504 1144 530 1150M600 990L614 970L632 998L648 978L658 1006L676 1004L672 1022L690 1024L682 1040L698 1054L684 1064L698 1080L684 1088L698 1104L684 1112L692 1130M520 1050Q540 1066 556 1060Q548 1080 530 1076ZM614 1040Q628 1032 636 1046M574 1160Q574 1130 600 1128Q630 1132 650 1150' +
        'M148 1116L160 916Q162 898 180 898L450 924Q468 930 468 944L452 1158M164 1090L178 932Q180 922 190 924L440 946Q450 950 448 960L434 1122L170 1096ZM104 1122Q100 1116 120 1116L260 1130Q264 1142 300 1142L360 1140L452 1148M104 1122Q106 1140 130 1146L300 1160M256 1044L248 1074L284 1068M290 1000Q300 990 306 1006L302 1020Q310 1036 324 1040L332 1034Q350 1044 338 1052Q310 1054 294 1028Q284 1012 290 1000Z' +
        'M774 1016L918 940Q924 938 928 946L966 1054Q920 1072 880 1112L830 1122ZM826 1104Q880 1080 944 1000M830 1114Q890 1090 946 1012M906 1040L950 1066M916 1034L960 1054M818 990L828 1010M836 1030L844 1050M850 1066L858 1084M878 966L886 986M892 1002L898 1020' + pin(872, 1028, 15) +
        'M922 1158Q926 1094 970 1094Q1016 1098 1018 1158M936 1158Q940 1106 970 1108Q1004 1110 1006 1158' + heart(762, 1130, 32)
    },
    {
      x: 1000, y: 20,
      rings: [33,45,15,113,209,6,214,99,9,237,397,17,189,451,8,169,477,13,120,477,9,225,442,8,32,46,15,45,4,7,83,48,6,115,127,52,115,127,41,206,28,40,175,632,65,175,632,53,376,714,65,376,714,53,272,664,9],
      sparks: [220,325,32],
      stars: [18,206,34],
      d:
        'M104 104Q110 94 118 118Q124 130 108 150M50 102Q50 80 70 80L56 104ZM126 66Q140 52 152 72L128 70' +
        'M148 240L180 170Q200 136 218 136Q254 148 254 162Q250 190 194 268Q180 266 148 240ZM182 172Q200 190 238 202M166 208Q190 226 214 236M232 134L242 122L256 130L250 148' + drop(205, 192, 14) +
        'M-20 340L50 240Q60 234 72 240L146 280Q154 284 152 296L180 400Q182 408 176 414L40 466Q26 470 22 460L-20 370M-20 366Q0 390 50 384Q110 376 152 300M22 462L54 386M178 404L112 360' + bar(56, 344, 94, 292, 5) + bar(38, 334, 52, 314, 5) +
        'M118-60L104 6Q102 16 118 24L168 44M196 24L216 20M196 36L218 32M10 124L2 66L24 78L30 112M10-60Q6-20-30 20M-60 6Q-30 0-26 36Q-40 70-60 70' +
        'M174 626L250 548Q274 540 262 518Q244 506 236 524Q222 516 230 500Q256 480 288 516L270 544L352 578Q346 600 300 640L266 668Q258 640 256 572M184 636L252 572M264 562L348 594L270 654ZM352 560Q346 548 370 548L404 548Q418 560 410 582L384 580Q366 580 352 560M360 600L384 580M346 624L366 710Q376 716 378 704L360 604M258 680L242 690L270 706L276 680'
    },
    {
      x: 1000, y: 340,
      rings: [178,378,12,190,333,8,170,220,9,166,280,6,178,247,6,210,141,11,236,166,7,47,504,15,11,516,7,91,493,7,17,642,13,21,688,11,194,713,9,76,773,6,99,805,8,119,857,15,150,848,7,143,885,8,95,433,10,59,703,4],
      sparks: [],
      stars: [205,852,34],
      d:
        'M-40 452L110 462Q120 460 120 448L128 330M96 372L92 424M102 372L102 424' +
        'M190 188L280 230L262 254L232 236L246 264L222 282Q200 230 190 188Z' +
        'M291 380Q300 470 240 510Q190 524 176 484Q180 440 228 430Q240 380 226 330Q230 316 246 350Q260 360 248 400Q270 430 292 400M222 360Q140 440 130 480Q132 560 190 572L286 570M316 484Q280 510 288 570Q310 610 350 608Q400 616 388 650Q370 680 340 684Q336 690 350 690Q410 680 424 650Q430 620 404 590Q362 560 372 508M190 572Q150 600 172 636Q200 652 250 650Q256 664 212 686Q270 700 280 650Q270 610 240 608Q236 596 290 604L330 606M440 534Q420 590 450 612Q500 620 520 580Q540 566 544 572Q530 640 424 650' +
        'M220 434Q240 436 226 460M232 478Q240 450 266 466M150 430Q166 440 150 458M134 494Q154 500 146 520M166 550Q184 530 192 568M222 570Q238 540 256 570M352 560Q340 546 364 540M388 590Q406 580 412 606M262 604Q274 584 288 604M252 624Q260 644 276 640' +
        'M20 556L100 528Q112 526 116 540L128 572M20 556L40 612L58 622L66 634L84 620L110 602' + bar(54, 566, 92, 555, 5) + bar(60, 584, 96, 573, 5) + 'M106 590L124 572L128 584L150 586L134 606L122 594Z' +
        'M36 712Q50 680 84 672L92 656L96 668Q120 668 142 680L160 652L160 682L172 690L146 696Q120 730 70 730Q50 728 36 712ZM72 684Q84 700 74 728M86 700Q100 684 114 692L104 704' + gear(151, 779, 32)
    }
  ].map((s) => ({
    x: s.x,
    y: s.y,
    d:
      chunk(s.rings, 3).map((a) => ring(...a)).join('') +
      chunk(s.sparks, 3).map((a) => spark(...a)).join('') +
      chunk(s.stars, 3).map((a) => star(...a)).join('') +
      s.d
  }));

  // kind, x, y, rotation, scale (page pixels)
  const stamps = [
    [CAMERA, 852, 97, -8, 1], [CAMERA, 421, 369, 5, 1], [CAMERA, 479, 581, -9, 1],
    [BELL, 553, 360, -4, 1], [BELL, 545, 590, 13, 1.1], [BELL, 692, 759, 22, 1]
  ];

  // text, x, y, rotation, size (page pixels)
  const letters = [
    ['24', 548, 80, -8, 34], ['42', 782, 38, -12, 29], ['W', 968, 40, 0, 20], ['Hi', 400, 739, 0, 27],
    ['B', 479, 164, 30, 30], ['F', 497, 176, 30, 30], ['F', 512, 189, 30, 30],
    ['文', 1020, 790, 8, 38], ['A', 1047, 803, 8, 38]
  ];
</script>

<main class="chat">
  <svg class="wallpaper" aria-hidden="true">
    <defs>
      <g id="doodles">
        {#each sheets as s}
          <path d={s.d} transform="translate({s.x} {s.y}) scale(0.3333)" />
        {/each}
        {#each stamps as [d, x, y, r, k]}
          <path {d} transform="translate({x} {y}) rotate({r}) scale({0.3333 * k})" />
        {/each}
        {#each letters as [t, x, y, r, size]}
          <text transform="translate({x} {y}) rotate({r})" font-size={size} dy="0.36em">{t}</text>
        {/each}
      </g>
    </defs>
    {#each [-1, 0, 1, 2] as i}
      <use href="#doodles" x={i * PERIOD} />
    {/each}
  </svg>

  <div class="date"><span>BUGÜN</span></div>

  <section class="messages" aria-label="Mesajlar">
    <div class="previous"></div>
    {#each sent as m}
      <div class="bubble out">
        <span class="text">{m.text}</span>
        <span class="meta">
          <time>{m.time}</time>
          <svg class="read" viewBox="0 0 18 12" role="img" aria-label="Okundu">
            <path d="M1 6.5L5.2 10.6L12.4 1M8 9.4L9.4 10.6L17 1" />
          </svg>
        </span>
      </div>
    {/each}
    <div class="group">
      {#each received as m, i}
        <div class="bubble in" class:first={i === 0}>
          <span class="text">{m.text}</span>
          <span class="meta"><time>{m.time}</time></span>
        </div>
      {/each}
    </div>
  </section>

  <p class="watermark">Windows'u Etkinleştir</p>

  <button class="jump" type="button" aria-label="En alta kaydır">
    <svg viewBox="0 0 20 12" aria-hidden="true"><path d="M2 2L10 9.6L18 2" /></svg>
  </button>
  <div class="thumb"></div>
</main>

<style>
  :global(body) {
    margin: 0;
    background: #0b141a;
  }
  .chat {
    position: relative;
    height: 100vh;
    overflow: hidden;
    background: #0b131a;
    color: #e9edef;
    font-family: 'Segoe UI', 'Noto Sans', 'Open Sans', sans-serif;
  }
  .wallpaper {
    position: absolute;
    inset: 0;
    width: 100%;
    height: 100%;
  }
  .wallpaper path,
  .wallpaper text {
    fill: none;
    stroke: #172026;
    stroke-linejoin: round;
    stroke-linecap: round;
  }
  .wallpaper path {
    stroke-width: 5;
  }
  .wallpaper text {
    stroke-width: 1.6;
    text-anchor: middle;
    font-family: Inter, 'Noto Sans CJK SC', sans-serif;
    font-weight: 700;
  }
  .date {
    position: absolute;
    inset: 8px 130px auto 116px;
    display: flex;
    justify-content: center;
  }
  .date span {
    padding: 0 16px;
    border-radius: 8px;
    background: #182229;
    color: #8696a0;
    font-size: 13px;
    line-height: 34px;
  }
  .messages {
    position: relative;
    display: flex;
    flex-direction: column;
    padding: 0 130px 0 114px;
  }
  .previous {
    align-self: flex-end;
    width: 209px;
    height: 1px;
    margin: 0 6px 2px 0;
    background: #005c4b;
  }
  .group {
    display: flex;
    flex-direction: column;
    align-items: flex-start;
    gap: 3px;
    margin-top: 10px;
  }
  .bubble {
    position: relative;
    box-sizing: border-box;
    display: flex;
    gap: 39px;
    height: 38px;
    padding: 0 8px 0 11px;
    border-radius: 8px;
    white-space: nowrap;
  }
  .in {
    background: #202c33;
  }
  .out {
    align-self: flex-end;
    gap: 41px;
    height: 39px;
    background: #005c4b;
  }
  .first {
    border-top-left-radius: 0;
  }
  .first::before {
    content: '';
    position: absolute;
    top: 0;
    left: -9px;
    width: 10px;
    height: 13px;
    background: #202c33;
    clip-path: polygon(0 0, 100% 0, 100% 100%, 90% 100%, 0 10%);
  }
  .text {
    font-size: 15px;
    line-height: 37px;
  }
  .meta {
    display: flex;
    gap: 4px;
    color: rgba(255, 255, 255, 0.6);
    font-size: 12px;
    line-height: 50px;
  }
  .read {
    width: 18px;
    height: 12px;
    margin-top: 19px;
    fill: none;
    stroke: #53bdeb;
    stroke-width: 1.5;
  }
  .watermark {
    position: absolute;
    right: 198px;
    bottom: -16px;
    margin: 0;
    color: #858585;
    font-family: 'Segoe UI', 'Open Sans', sans-serif;
    font-size: 24px;
    line-height: 30px;
  }
  .jump {
    position: absolute;
    right: 14px;
    bottom: 7px;
    display: grid;
    place-items: center;
    width: 52px;
    height: 52px;
    padding: 0;
    border: 0;
    border-radius: 50%;
    background: #202c33;
  }
  .jump svg {
    width: 20px;
    height: 12px;
    margin-top: 3px;
    fill: none;
    stroke: #8b959b;
    stroke-width: 2.4;
  }
  .thumb {
    position: absolute;
    right: 0;
    top: 401px;
    bottom: 53px;
    width: 10px;
    background: rgba(255, 255, 255, 0.16);
  }
</style>
